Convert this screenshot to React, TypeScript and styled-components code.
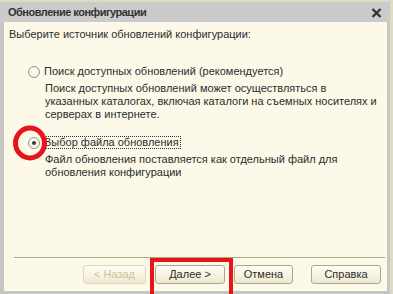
import React from "react";
import styled, { createGlobalStyle } from "styled-components";

const Global = createGlobalStyle`
  html, body { margin: 0; padding: 0; background: #dedac4; }
  body { width: 393px; height: 294px; overflow: hidden; font-family: "Liberation Sans", Arial, sans-serif; }
`;

const Window = styled.div`
  position: relative;
  margin: 2px 3px 0 0;
  height: 292px;
  box-sizing: border-box;
  border-left: 4px solid #c6c6c6;
  border-right: 3px solid #c6c6c6;
  border-bottom: 3px solid #c6c6c6;
  display: flex;
  flex-direction: column;
  background: #fcf9e9;
`;

const TitleBar = styled.div`
  height: 20px;
  margin-left: -4px;
  margin-right: -3px;
  background: #cbcbcb;
  display: flex;
  align-items: center;
  justify-content: space-between;
  padding: 0 8px 0 8px;
`;

const Title = styled.div`
  font-weight: bold;
  font-size: 11px;
  letter-spacing: -0.5px;
  color: #333;
`;

const Close = styled.svg`
  width: 11px;
  height: 10px;
  margin-top: 1px;
`;

const Body = styled.div`
  flex: 1;
  display: flex;
  flex-direction: column;
  padding: 6px 6px 7px 5px;
  font-size: 11px;
  line-height: 13px;
  color: #2c2c2c;
  white-space: nowrap;
`;

const Prompt = styled.div``;

const Options = styled.div`
  margin-top: 24px;
  margin-left: 19px;
  display: flex;
  flex-direction: column;
  gap: 15px;
`;

const Option = styled.div`
  display: flex;
  flex-direction: column;
  gap: 4px;
`;

const RadioRow = styled.div`
  display: flex;
  align-items: center;
  gap: 2px;
  height: 13px;
`;

const Radio = styled.span<{ $checked?: boolean }>`
  width: 12px;
  height: 12px;
  border-radius: 50%;
  box-sizing: border-box;
  border: 1px solid #9a9682;
  background: radial-gradient(circle at 40% 40%, #ffffff 0%, #f4f1e0 70%, #e4e0cc 100%);
  display: flex;
  align-items: center;
  justify-content: center;
  &::after {
    content: "";
    width: 4px;
    height: 4px;
    border-radius: 50%;
    background: ${(p) => (p.$checked ? "#3a3a3a" : "transparent")};
  }
`;

const Label = styled.span<{ $focused?: boolean }>`
  padding: 0 1px;
  border: 1px dotted ${(p) => (p.$focused ? "#333" : "transparent")};
  line-height: 11px;
`;

const Desc = styled.div`
  margin-left: 17px;
`;

const Spacer = styled.div`
  flex: 1;
`;

const Separator = styled.div`
  height: 1px;
  background: #a9a585;
  border-bottom: 1px solid #fffdf2;
  margin: 0 0 0 5px;
  width: 371px;
`;

const Buttons = styled.div`
  margin-top: 6px;
  display: flex;
  justify-content: flex-end;
`;

const Button = styled.div<{ $w: number; $gap?: number; $disabled?: boolean }>`
  width: ${(p) => p.$w}px;
  margin-left: ${(p) => p.$gap ?? 0}px;
  height: 19px;
  box-sizing: border-box;
  border: 1px solid ${(p) => (p.$disabled ? "#dcd7bf" : "#aea78a")};
  border-radius: 3px;
  background: linear-gradient(#fffef6, #f6f2de 60%, #ece7cf);
  color: ${(p) => (p.$disabled ? "#c9c2a2" : "#2c2c2c")};
  font-size: 11px;
  display: flex;
  align-items: center;
  justify-content: center;
`;

const RedRect = styled.div`
  position: absolute;
  left: 146px;
  top: 256px;
  width: 83px;
  height: 40px;
  box-sizing: border-box;
  border: 4px solid #e8141c;
`;

const RedCircle = styled.svg`
  position: absolute;
  left: 8px;
  top: 122px;
  width: 36px;
  height: 38px;
`;

export default function App() {
  return (
    <>
      <Global />
      <Window>
        <TitleBar>
          <Title>Обновление конфигурации</Title>
          <Close viewBox="0 0 11 10">
            <path d="M1.5 1 L9.5 9 M9.5 1 L1.5 9" stroke="#333" strokeWidth="2.4" />
          </Close>
        </TitleBar>
        <Body>
          <Prompt>Выберите источник обновлений конфигурации:</Prompt>
          <Options>
            <Option>
              <RadioRow>
                <Radio />
                <Label>Поиск доступных обновлений (рекомендуется)</Label>
              </RadioRow>
              <Desc>
                Поиск доступных обновлений может осуществляться в
                <br />
                указанных каталогах, включая каталоги на съемных носителях и
                <br />
                серверах в интернете.
              </Desc>
            </Option>
            <Option>
              <RadioRow>
                <Radio $checked />
                <Label $focused>Выбор файла обновления</Label>
              </RadioRow>
              <Desc>
                Файл обновления поставляется как отдельный файл для
                <br />
                обновления конфигурации
              </Desc>
            </Option>
          </Options>
          <Spacer />
          <Separator />
          <Buttons>
            <Button $w={63} $disabled>
              &lt; Назад
            </Button>
            <Button $w={70} $gap={9}>
              Далее &gt;
            </Button>
            <Button $w={59} $gap={9}>
              Отмена
            </Button>
            <Button $w={70} $gap={18}>
              Справка
            </Button>
          </Buttons>
        </Body>
        <RedRect />
        <RedCircle viewBox="0 0 36 38">
          <ellipse cx="18" cy="19" rx="14.5" ry="15" fill="none" stroke="#e8141c" strokeWidth="5" />
        </RedCircle>
      </Window>
    </>
  );
}
